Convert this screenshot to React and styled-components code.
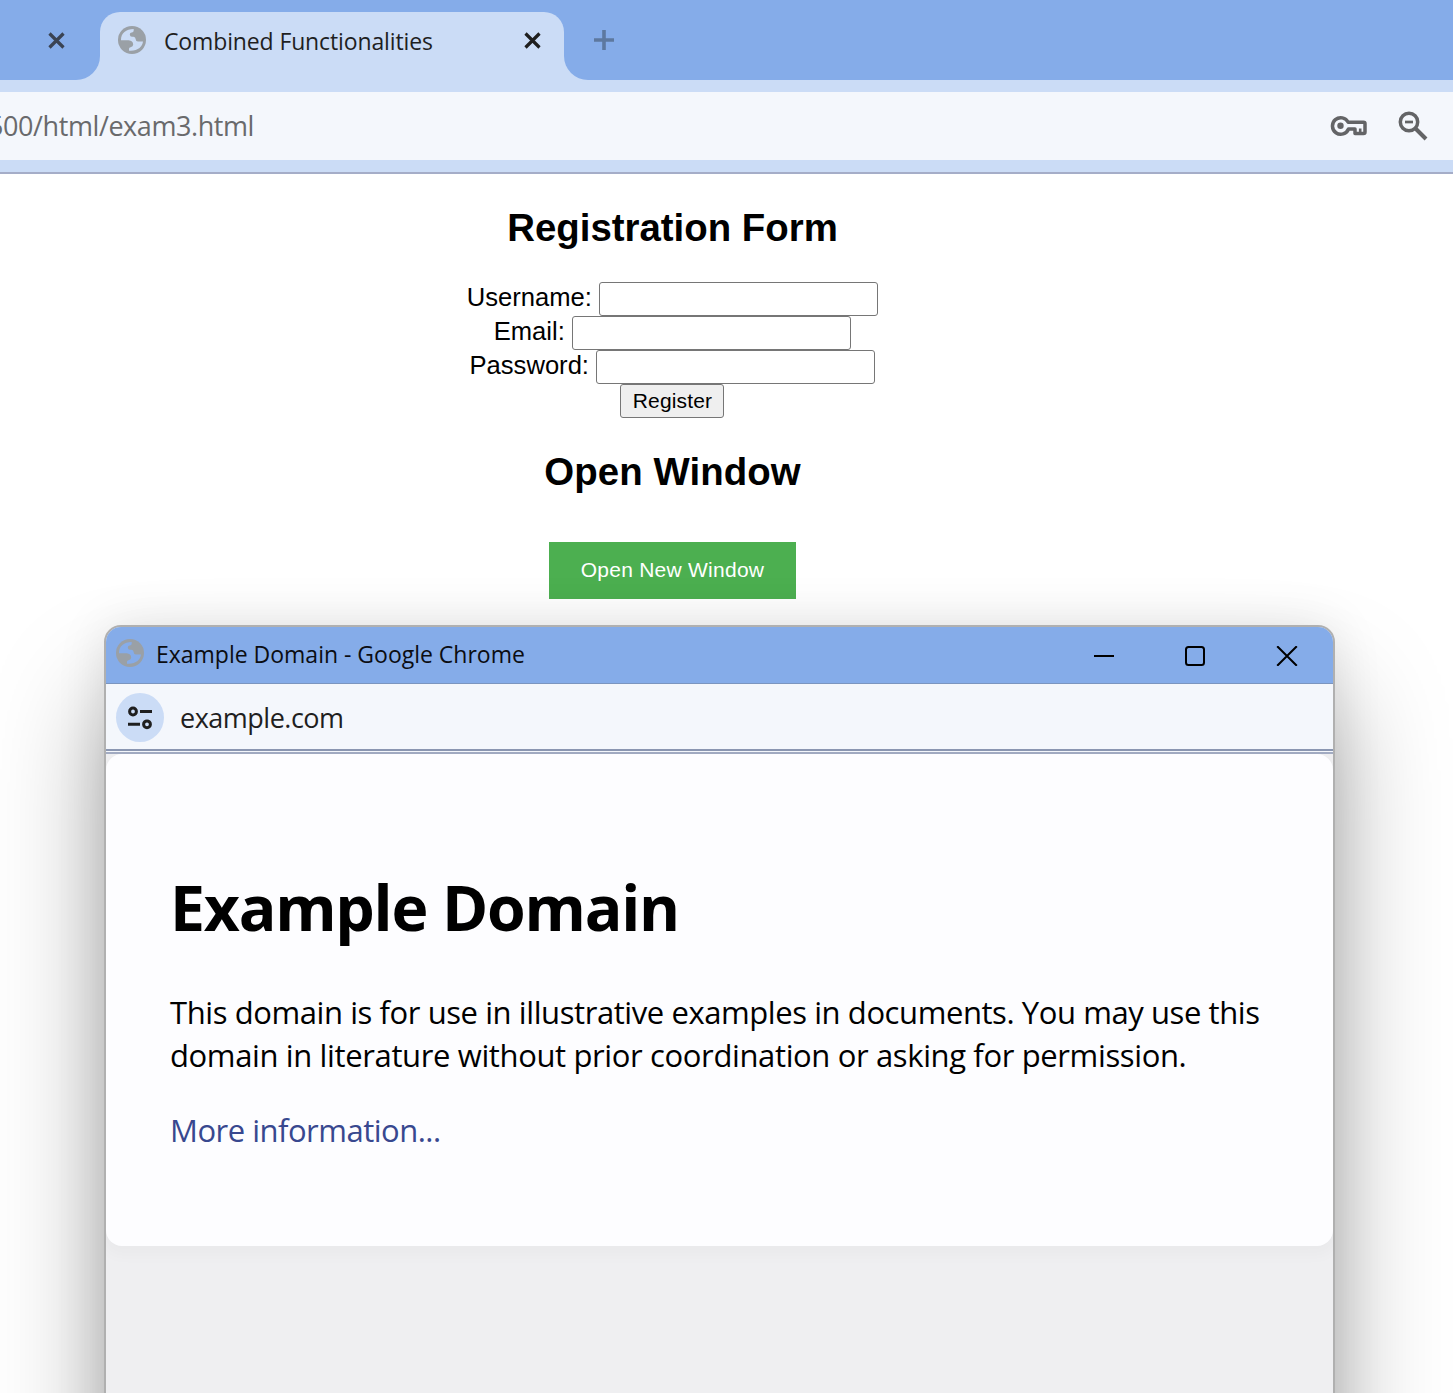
import React from "react";
import styled, { createGlobalStyle } from "styled-components";

const ui = `"Open Sans", "Noto Sans", sans-serif`;
const page = `"Liberation Sans", Arial, sans-serif`;

const Global = createGlobalStyle`
  * { box-sizing: border-box; }
  html, body { margin: 0; background: #fff; }
`;

const Screen = styled.div`
  position: relative;
  width: 1453px;
  height: 1393px;
  overflow: hidden;
  background: #fff;
  display: flex;
  flex-direction: column;
`;

const TabStrip = styled.div`
  display: flex;
  height: 80px;
  flex: none;
  background: #cbdcf6;
`;

const StripEnd = styled.div`
  display: flex;
  align-items: center;
  background: #85ace9;
  ${(p) =>
    p.$left
      ? "width: 100px; padding-left: 47.5px; border-bottom-right-radius: 24px;"
      : "flex: 1; padding-left: 29px; border-bottom-left-radius: 24px;"}
`;

const TabBack = styled.div`
  width: 464px;
  background: #85ace9;
  display: flex;
  align-items: flex-end;
`;

const Tab = styled.div`
  flex: 1;
  height: 68px;
  padding: 0 23.5px 12px 18px;
  display: flex;
  align-items: center;
  background: #cbdcf6;
  border-radius: 20px 20px 0 0;
`;

const Label = styled.span`
  font-family: ${ui};
  font-size: ${(p) => p.$size}px;
  line-height: 32px;
  letter-spacing: ${(p) => p.$track || 0}px;
  color: ${(p) => p.$color || "#1f1f1f"};
  white-space: nowrap;
`;

const TabTitle = styled(Label)`
  flex: 1;
  margin-left: 18px;
  padding-top: 2px;
`;

const AddressBar = styled.div`
  flex: none;
  height: 94px;
  padding: 12px 0;
  background: #cbdcf6;
  border-bottom: 2px solid #a5adc8;
`;

const AddressField = styled.div`
  height: 68px;
  display: flex;
  align-items: center;
  padding-right: 25px;
  background: #f4f7fc;
`;

const Url = styled.div`
  width: 254px;
  overflow: hidden;
  display: flex;
  justify-content: flex-end;
`;

const FieldIcons = styled.div`
  flex: 1;
  display: flex;
  justify-content: flex-end;
  align-items: center;
  gap: 30px;
`;

const Content = styled.main`
  width: 1345px;
  display: flex;
  flex-direction: column;
  align-items: center;
  font-family: ${page};
  font-size: 25.6px;
  color: #000;
`;

const Heading = styled.h2`
  margin: 32px 0 0;
  font-size: 38.4px;
  line-height: 44px;
  letter-spacing: ${(p) => p.$track}px;
`;

const Form = styled.form`
  margin-top: 32px;
  display: flex;
  flex-direction: column;
  align-items: center;
`;

const Row = styled.label`
  height: 34px;
  display: flex;
  gap: 7px;
  line-height: 30px;
`;

const Input = styled.input`
  width: 279.5px;
  height: 34px;
  margin: 0;
  padding: 2px;
  border: 1px solid #767676;
  border-radius: 3px;
  background: #fff;
`;

const Register = styled.button`
  width: 104px;
  height: 34px;
  padding: 0;
  border: 1px solid #767676;
  border-radius: 3px;
  background: #efefef;
  font: 21px/30px ${page};
  letter-spacing: 0.15px;
  color: #000;
`;

const OpenButton = styled.button`
  width: 247px;
  height: 57px;
  margin-top: 48px;
  padding: 0 0 2px;
  border: 0;
  background: #4caf50;
  color: #fff;
  font: 21px/55px ${page};
  letter-spacing: 0.25px;
`;

const Popup = styled.section`
  position: absolute;
  left: 104px;
  top: 625px;
  width: 1231px;
  height: 960px;
  border: 2px solid #b0b0b0;
  border-radius: 17px;
  background: #efeff1;
  box-shadow: 0 74px 110px rgba(0, 0, 0, 0.34), 0 2px 50px rgba(0, 0, 0, 0.11);
  overflow: hidden;
`;

const TitleBar = styled.header`
  height: 57px;
  padding: 0 35px 3px 10px;
  display: flex;
  align-items: center;
  background: #85ace9;
  border-bottom: 1px solid #7b95bf;
`;

const WindowTitle = styled(Label)`
  flex: 1;
  margin-left: 12px;
  padding-top: 1px;
`;

const WindowButtons = styled.div`
  display: flex;
  gap: 71px;
  padding-top: 5px;
`;

const LocationBar = styled.div`
  height: 70px;
  display: flex;
  align-items: center;
  gap: 16px;
  padding: 0 10px 2px;
  background: linear-gradient(#8b97b2, #8b97b2) 0 65px / 100% 2px no-repeat, #f4f7fc;
  border-bottom: 2px solid #a2abc2;
`;

const SiteInfo = styled.span`
  width: 48px;
  height: 49px;
  border-radius: 50%;
  display: grid;
  place-items: center;
  padding-top: 2px;
  background: #cbdcf6;
`;

const Domain = styled(Label)`
  padding-top: 2px;
`;

const Card = styled.article`
  height: 492px;
  padding: 116px 64px 0;
  background: #fdfdff;
  border-radius: 16px;
  box-shadow: 0 6px 14px 4px rgba(0, 0, 0, 0.025);
  font-family: ${ui};
  color: #000;
`;

const Title = styled.h1`
  margin: 0;
  font-size: 62.5px;
  line-height: 74px;
  letter-spacing: -1.25px;
`;

const Paragraph = styled.p`
  margin: 47px 0 0;
  font-size: 31px;
  line-height: 43px;
  white-space: nowrap;
`;

const Line = styled.span`
  display: block;
  letter-spacing: ${(p) => p.$track}px;
`;

const More = styled.a`
  display: block;
  margin-top: 32px;
  font-size: 31px;
  line-height: 43px;
  letter-spacing: -0.5px;
  color: #38488f;
`;

const GlobeIcon = styled.svg`
  flex: none;
  margin-bottom: ${(p) => p.$lift || 0}px;
`;

const Globe = ({ land, lift }) => (
  <GlobeIcon width="28" height="28" viewBox="0 0 28 28" $lift={lift}>
    <circle cx="14" cy="14" r="14" fill="#9aa0a6" />
    <path
      fill={land}
      d="M3 13.600C3 7.500 8 3 15.700 3V4.600Q15.700 6.600 13.700 6.600Q11.800 6.700 11.800 8.400Q11.900 10.600 14 10.800H15.500Q17.500 11 17.700 13.200Q17.800 15.500 20 15.500H25C24.500 20.500 19.500 25.500 11 24.700V22.800Q11 21.300 12.600 21.200Q15.200 21 15.200 18.600Q15 14.600 10.600 14.300H3z"
    />
  </GlobeIcon>
);

const Cross = ({ color }) => (
  <svg width="17" height="17" viewBox="0 0 17 17">
    <path d="M1.500 1.500L15.500 15.500M15.500 1.500L1.500 15.500" stroke={color} strokeWidth="3.200" />
  </svg>
);

const Plus = () => (
  <svg width="22" height="20" viewBox="0 0 22 20">
    <path d="M1 10h20M11 0v20" stroke="#5d789f" strokeWidth="3.600" />
  </svg>
);

const Key = () => (
  <svg width="38" height="22" viewBox="0 0 38 22" fill="none" stroke="#636466">
    <path strokeWidth="3.500" strokeLinejoin="round" d="M18.200 7.300H33.500a1.500 1.500 0 0 1 1.500 1.500V17a1.500 1.500 0 0 1-1.500 1.500H25V14H18.500A8.300 8.300 0 1 1 18.200 7.300z" />
    <path strokeWidth="2.600" d="M30.200 13.500v5" />
    <circle cx="10.500" cy="10.800" r="3.200" fill="#636466" stroke="none" />
  </svg>
);

const ZoomOut = () => (
  <svg width="30" height="30" viewBox="0 0 30 30" fill="none" stroke="#636466">
    <circle cx="11" cy="11" r="8.700" strokeWidth="3.500" />
    <path strokeWidth="4" d="M17 17L28 28" />
    <path strokeWidth="2.700" d="M7 11h8" />
  </svg>
);

const Tune = () => (
  <svg width="24" height="24" viewBox="0 0 24 24" fill="none" stroke="#1f1f1f" strokeWidth="3">
    <circle cx="5" cy="5.500" r="3.400" />
    <circle cx="19" cy="18.300" r="3.400" />
    <path d="M12 5.500h12M0 18.300h12" />
  </svg>
);

const Minimize = () => (
  <svg width="20" height="20" viewBox="0 0 20 20">
    <path d="M0 10h20" stroke="#000" strokeWidth="2" />
  </svg>
);

const Maximize = () => (
  <svg width="20" height="20" viewBox="0 0 20 20">
    <rect x="1" y="1" width="18" height="18" rx="2.500" fill="none" stroke="#000" strokeWidth="2" />
  </svg>
);

const Close = () => (
  <svg width="22" height="20" viewBox="0 0 22 20">
    <path d="M1.200 .2L20.800 19.800M20.800 .2L1.200 19.800" stroke="#000" strokeWidth="2" />
  </svg>
);

const fields = [
  { label: "Username:", type: "text" },
  { label: "Email:", type: "email" },
  { label: "Password:", type: "password" },
];

export default function App() {
  return (
    <Screen>
      <Global />
      <TabStrip>
        <StripEnd $left>
          <Cross color="#3a4353" />
        </StripEnd>
        <TabBack>
          <Tab>
            <Globe land="#cbdcf6" />
            <TabTitle $size={23} $track={-0.13}>Combined Functionalities</TabTitle>
            <Cross color="#1f1f1f" />
          </Tab>
        </TabBack>
        <StripEnd>
          <Plus />
        </StripEnd>
      </TabStrip>
      <AddressBar>
        <AddressField>
          <Url>
            <Label $size={27} $track={-0.42} $color="#696a6c">500/html/exam3.html</Label>
          </Url>
          <FieldIcons>
            <Key />
            <ZoomOut />
          </FieldIcons>
        </AddressField>
      </AddressBar>
      <Content>
        <Heading $track={0}>Registration Form</Heading>
        <Form>
          {fields.map((f) => (
            <Row key={f.label}>
              {f.label}
              <Input type={f.type} />
            </Row>
          ))}
          <Register type="button">Register</Register>
        </Form>
        <Heading $track={0.1}>Open Window</Heading>
        <OpenButton>Open New Window</OpenButton>
      </Content>
      <Popup>
        <TitleBar>
          <Globe land="#85ace9" lift={2} />
          <WindowTitle $size={23} $track={-0.01} $color="#0b0d12">Example Domain - Google Chrome</WindowTitle>
          <WindowButtons>
            <Minimize />
            <Maximize />
            <Close />
          </WindowButtons>
        </TitleBar>
        <LocationBar>
          <SiteInfo>
            <Tune />
          </SiteInfo>
          <Domain $size={27} $track={-0.5}>example.com</Domain>
        </LocationBar>
        <Card>
          <Title>Example Domain</Title>
          <Paragraph>
            <Line $track={-0.42}>This domain is for use in illustrative examples in documents. You may use this</Line>
            <Line $track={-0.37}>domain in literature without prior coordination or asking for permission.</Line>
          </Paragraph>
          <More>More information...</More>
        </Card>
      </Popup>
    </Screen>
  );
}
